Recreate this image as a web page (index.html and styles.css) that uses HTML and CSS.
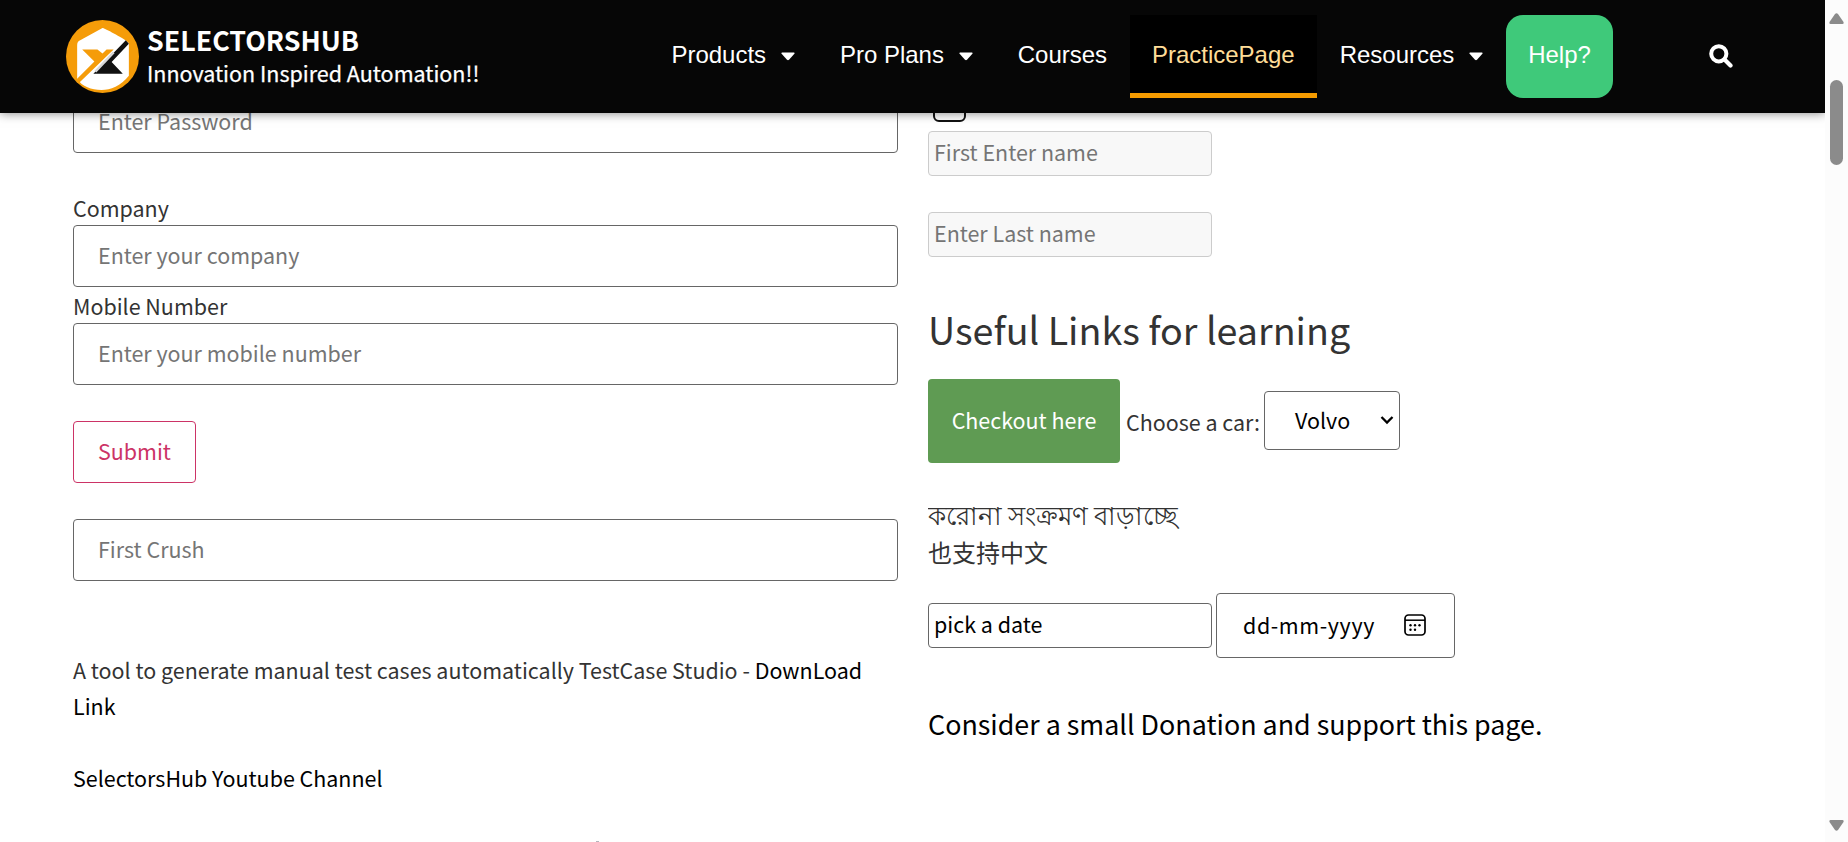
FILE: index.html
```html
<!DOCTYPE html>
<html lang="en">
<head>
<meta charset="utf-8">
<title>SelectorsHub Practice Page</title>
<link rel="stylesheet" href="styles.css">
</head>
<body>
<div class="viewport">
  <div class="page">
    <header class="header">
      <div class="brand">
        <svg class="logo" viewBox="0 0 72 72">
          <circle cx="36" cy="36" r="36" fill="#f59c09"/>
          <path d="M36 8 C38 8 56 18 60 21 L62 23 V55 C54 65 44 69 35 69 C25 69 16 66 11 58 V25 C11 22 12 21 14 20 Z" fill="#fff"/>
          <path d="M16 29 H31 L36 33 L40 29 H47 L13 62 L10 59 L28 41 Z" fill="#f59c09"/>
          <path d="M59 20 L62 23.500 L45 41.500 L56 53 H27 Z" fill="#111"/>
          <path d="M29 51 L47 32" stroke="#d8d8d8" stroke-width="2.4"/>
        </svg>
        <div class="brand-text">
          <div class="brand-name">SELECTORSHUB</div>
          <div class="brand-tag">Innovation Inspired Automation!!</div>
        </div>
      </div>
      <nav class="nav">
        <a class="item">Products<svg class="caret" viewBox="0 0 14 9"><path d="M1 .5H13Q14 1 13.4 1.8L8 7.8Q7 8.6 6 7.8L.6 1.8Q0 1 1 .5Z"/></svg></a>
        <a class="item">Pro Plans<svg class="caret" viewBox="0 0 14 9"><path d="M1 .5H13Q14 1 13.4 1.8L8 7.8Q7 8.6 6 7.8L.6 1.8Q0 1 1 .5Z"/></svg></a>
        <a class="item">Courses</a>
        <a class="item current">PracticePage</a>
        <a class="item">Resources<svg class="caret" viewBox="0 0 14 9"><path d="M1 .5H13Q14 1 13.4 1.8L8 7.8Q7 8.6 6 7.8L.6 1.8Q0 1 1 .5Z"/></svg></a>
        <a class="item help">Help?</a>
      </nav>
      <svg class="search" viewBox="0 0 24 24"><circle cx="9.8" cy="9.8" r="7.6" fill="none" stroke="#fff" stroke-width="4"/><path d="M15.5 15.5L21.5 21.5" stroke="#fff" stroke-width="4.2" stroke-linecap="round"/></svg>
    </header>
    <main class="columns">
      <section class="left">
        <input class="field" placeholder="Enter Password">
        <label class="label top-gap">Company</label>
        <input class="field" placeholder="Enter your company">
        <label class="label">Mobile Number</label>
        <input class="field" placeholder="Enter your mobile number">
        <button class="submit">Submit</button>
        <input class="field" placeholder="First Crush">
        <p class="text intro">A tool to generate manual test cases automatically TestCase Studio - <a>DownLoad</a><br><a>Link</a></p>
        <p class="text"><a>SelectorsHub Youtube Channel</a></p>
        <div class="next-edge"></div>
      </section>
      <section class="right">
        <div class="check"></div>
        <input class="small muted" placeholder="First Enter name">
        <input class="small muted second" placeholder="Enter Last name">
        <h2 class="title">Useful Links for learning</h2>
        <div class="row">
          <button class="checkout">Checkout here</button>
          <span class="choose">Choose a car:</span>
          <div class="select"><span>Volvo</span><svg class="chev" viewBox="0 0 14 10"><path d="M1.5 2L7 7.5L12.5 2" fill="none" stroke="#000" stroke-width="2.3"/></svg></div>
        </div>
        <div class="bengali">করোনা সংক্রমণ বাড়াচ্ছে</div>
        <div class="chinese">也支持中文</div>
        <div class="row dates">
          <input class="small" value="pick a date">
          <div class="date"><span>dd-mm-yyyy</span><svg class="cal" viewBox="0 0 22 22"><rect x="1" y="1" width="20" height="20" rx="3.5" fill="none" stroke="#000" stroke-width="1.7"/><path d="M1 6.200H21" stroke="#000" stroke-width="1.500"/><g><circle cx="6.500" cy="11.300" r="1.200"/><circle cx="11" cy="11.300" r="1.200"/><circle cx="15.500" cy="11.300" r="1.200"/><circle cx="6.500" cy="15.800" r="1.200"/><circle cx="11" cy="15.800" r="1.200"/></g></svg></div>
        </div>
        <p class="donate">Consider a small Donation and support this page.</p>
      </section>
    </main>
  </div>
  <div class="scrollbar">
    <svg class="arrow" viewBox="0 0 15 11"><path d="M6 1Q7.500 -.5 9 1L14.500 9Q15 11 13.500 11H1.500Q0 11 .5 9Z"/></svg>
    <div class="thumb"></div>
    <svg class="arrow down" viewBox="0 0 15 11"><path d="M6 10Q7.500 11.500 9 10L14.500 2Q15 0 13.500 0H1.500Q0 0 .5 2Z"/></svg>
  </div>
</div>
</body>
</html>
```
FILE: styles.css
```css
* { box-sizing: border-box; }
body { margin: 0; background: #fff; color: #333; font: 21.46px/36px "Noto Sans CJK SC", sans-serif; overflow: hidden; }
.viewport { display: flex; width: 1848px; height: 842px; overflow: hidden; }
.page { width: 1825px; height: 842px; overflow: hidden; }
input, button { font: inherit; display: block; margin: 0; outline: none; }
.header { position: relative; z-index: 2; display: flex; height: 113px; background: #060606; box-shadow: 0 0 10px rgba(0,0,0,.5); }
.brand { display: flex; width: 649px; padding: 20px 0 0 66px; gap: 8px; }
.logo { width: 73px; height: 73px; }
.brand-text { color: #fff; padding-top: 3px; white-space: nowrap; }
.brand-name { font-weight: 700; font-size: 26.8px; line-height: 34px; }
.brand-tag { font-weight: 400; font-size: 21.5px; line-height: 32px; -webkit-text-stroke: .25px #fff; }
.nav { display: flex; padding-top: 15px; }
.item { display: flex; align-items: center; height: 83px; padding: 0 22.4px 4px; color: #fff; font: 24px/36px "Liberation Sans", Arial, sans-serif; white-space: nowrap; }
.caret { width: 14px; height: 9px; margin: 3px 0 0 15px; fill: #fff; }
.nav .current { padding: 1px 22.6px 0 22.4px; background: #000; color: #ffdd98; border-bottom: 5px solid #f59b00; }
.help { background: #3fc97a; border-radius: 17px; }
.search { width: 24px; height: 24px; margin: 44px 0 0 96px; }
.columns { display: flex; padding-left: 73px; gap: 30px; }
.left { width: 825px; margin-top: -22px; display: flex; flex-direction: column; }
.field { width: 825px; height: 62px; padding: 0 24px 3px; border: 1px solid #666; border-radius: 4px; background: #fff; flex: none; }
input::placeholder { color: #757575; opacity: 1; }
.label { height: 36px; line-height: 38px; }
.top-gap { margin-top: 36px; }
.submit { width: 123px; height: 62px; margin: 36px 0; padding: 0 0 2px; border: 1px solid #c36; border-radius: 4px; background: transparent; color: #c36; }
.text { margin: 0 0 36px; }
.intro { margin-top: 71px; }
.next-edge { width: 3px; height: 1px; margin: 9px 0 0 523px; background: #b5b5bd; }
a { color: #000; }
.right { width: 800px; }
.check { width: 33px; height: 33px; margin: -24px 0 0 5px; border: 2px solid #111; border-radius: 6px; }
.small { width: 284px; height: 45px; padding: 0 5px 4px; border: 1px solid #666; border-radius: 4px; color: #000; background: #fff; }
.muted { margin-top: 9px; border-color: #ccc; background: #f8f8f8; }
.second { margin-top: 36px; }
.title { margin: 46px 0 0; font-size: 37.65px; font-weight: 400; line-height: 52px; }
.row { display: flex; align-items: center; }
.title + .row { margin-top: 24px; }
.checkout { width: 192px; height: 84px; padding: 0 0 2px; border: 0; border-radius: 4px; color: #fff; background: #5f9b53; }
.choose { width: 138px; margin: 2px 0 0 6px; white-space: nowrap; }
.select { display: flex; align-items: center; justify-content: space-between; width: 136px; height: 59px; margin-bottom: 2px; padding: 0 5px 0 30px; border: 1px solid #666; border-radius: 4px; color: #000; }
.chev { width: 14px; height: 10px; }
/* The line box is shorter than the glyphs, so marks above the headline are cut off. */
.bengali { height: 27px; margin-top: 44px; font-size: 26.4px; line-height: 14px; white-space: nowrap; overflow: hidden; }
.chinese { height: 36px; font-size: 24px; line-height: 35px; }
.dates { gap: 4px; margin-top: 23px; height: 65px; }
.date { display: flex; align-items: center; width: 239px; height: 65px; padding: 0 28px 1px 26px; justify-content: space-between; border: 1px solid #666; border-radius: 4px; color: #000; letter-spacing: .6px; }
.cal { width: 22px; height: 22px; }
.donate { margin: 43px 0 0; font-size: 26.85px; line-height: 45px; color: #000; white-space: nowrap; }
.scrollbar { display: flex; flex-direction: column; align-items: center; width: 23px; height: 842px; background: #fcfcfc; }
.arrow { width: 15px; height: 11px; margin-top: 13px; fill: #8b8b8b; flex: none; }
.thumb { width: 13px; height: 85px; margin-top: 56px; border-radius: 7px; background: #8b8b8b; }
.down { margin: auto 0 11px; }
```
